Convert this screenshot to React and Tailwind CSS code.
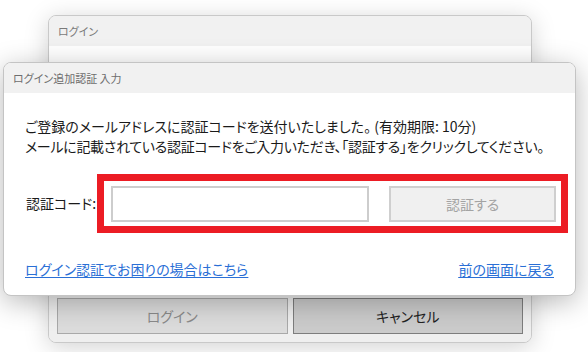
import React from "react";

const jp = "font-['Segoe_UI','Noto_Sans_CJK_JP',sans-serif] [font-feature-settings:'palt']";

function BackWindow() {
    return (
        <div className="absolute left-[48px] top-[15px] w-[484px] h-[328px] flex flex-col rounded-[8px] border border-[#c9c9c9] bg-[#f4f4f4] overflow-hidden shadow-[0_4px_24px_rgba(0,0,0,0.18)]">
            <div className="h-[30px] shrink-0 flex items-center px-[9px] bg-[#f1f1f1] text-[11px] text-[#7a7a7a]">
                ログイン
            </div>
            <div className="flex-1 bg-white" />
            <div className="flex gap-[5px] px-[8px] pt-[4px] pb-[8px] bg-[#efefef]">
                <button className="flex-1 h-[36px] border border-[#a9a9a9] bg-[#dcdcdc] text-[14px] text-[#8a8a8a]">
                    ログイン
                </button>
                <button className="flex-1 h-[36px] border border-[#7d7d7d] bg-[#cbcbcb] text-[14px] text-[#222]">
                    キャンセル
                </button>
            </div>
        </div>
    );
}

function AuthDialog() {
    return (
        <div className="absolute left-[3px] top-[62px] w-[573px] h-[234px] flex flex-col rounded-[8px] border border-[#c4c4c4] bg-white overflow-hidden shadow-[0_6px_28px_rgba(0,0,0,0.28)]">
            <div className="h-[30px] shrink-0 flex items-center px-[9px] bg-[#f1f1f1] text-[11px] text-[#6e6e6e]">
                ログイン追加認証 入力
            </div>
            <div className="flex-1 flex flex-col px-[21px] pt-[23px] text-[14px] text-[#1a1a1a]">
                <p className="leading-[20px] whitespace-nowrap">ご登録のメールアドレスに認証コードを送付いたしました。 (有効期限: 10分)</p>
                <p className="leading-[20px] whitespace-nowrap tracking-[-0.3px]">メールに記載されている認証コードをご入力いただき、「認証する」をクリックしてください。</p>
                <div className="mt-[18px] flex items-center">
                    <span className="w-[72px] shrink-0 pl-[1px] whitespace-nowrap">認証コード:</span>
                    <div className="w-[471px] shrink-0 flex items-center gap-[20px] border-[7px] border-[#ec1c24] pl-[7px] pr-[5px] pt-[5px] pb-[4px]">
                        <input className="w-[258px] h-[36px] border-2 border-[#cdcdcd] bg-white outline-none px-2" />
                        <button className="flex-1 h-[36px] border-2 border-[#cfcfcf] bg-[#f0f0f0] text-[14px] text-[#a3a3a3]">
                            認証する
                        </button>
                    </div>
                </div>
                <div className="mt-[26px] flex justify-between leading-[20px] text-[#2a6fd6] underline underline-offset-2">
                    <a href="#">ログイン認証でお困りの場合はこちら</a>
                    <a href="#">前の画面に戻る</a>
                </div>
            </div>
        </div>
    );
}

export default function App() {
    return (
        <div className={`relative w-[588px] h-[352px] overflow-hidden bg-white ${jp}`}>
            <BackWindow />
            <AuthDialog />
        </div>
    );
}
